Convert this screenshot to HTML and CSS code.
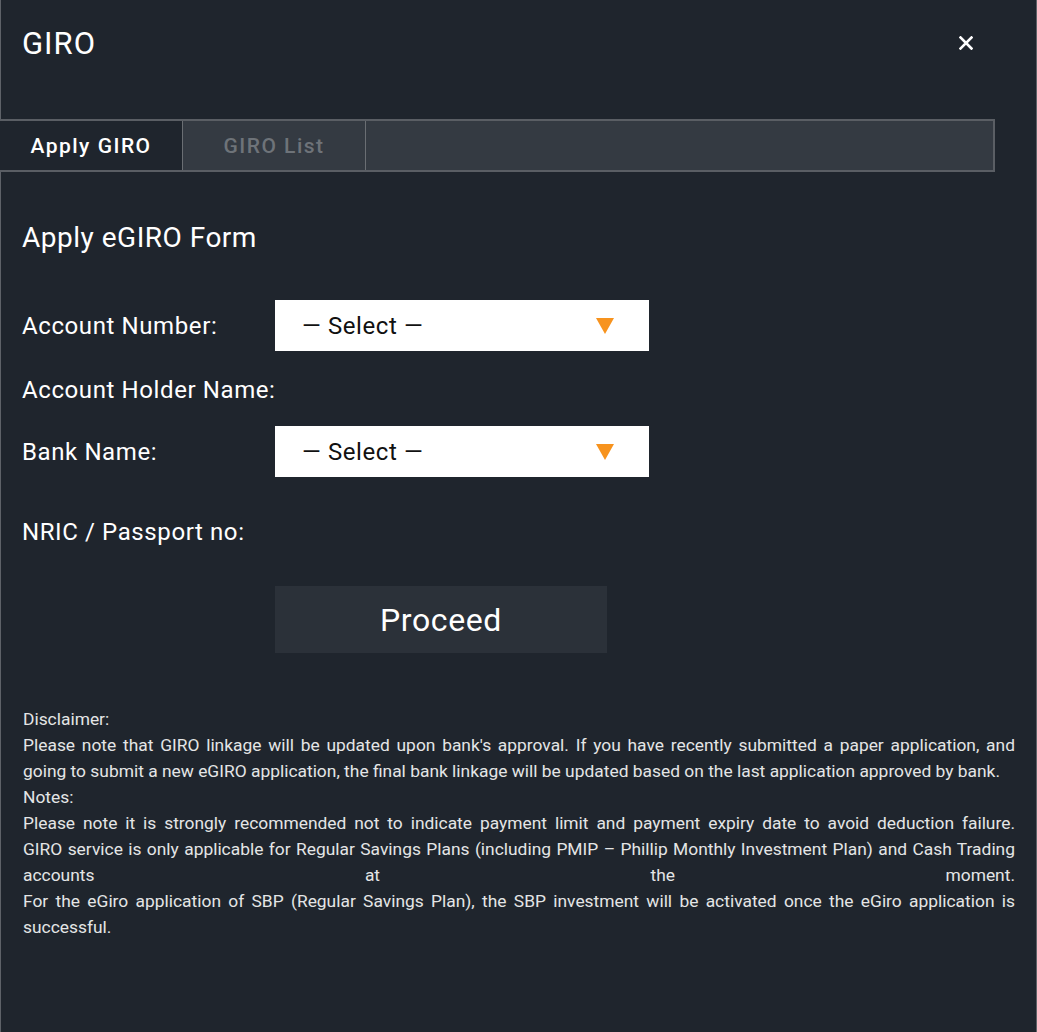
FILE: index.html
```html
<!DOCTYPE html>
<html lang="en">
<head>
<meta charset="utf-8">
<title>GIRO</title>
<link rel="stylesheet" href="styles.css">
</head>
<body>
<div class="dialog">
  <header class="header">
    <h1 class="title">GIRO</h1>
    <button class="close" aria-label="Close">
      <svg width="14" height="14" viewBox="0 0 14 14"><path d="M1.5 1.5 L12.5 12.5 M12.5 1.5 L1.5 12.5" stroke="#fff" stroke-width="2.6" stroke-linecap="square"/></svg>
    </button>
  </header>
  <nav class="tabs">
    <div class="tab active">Apply GIRO</div>
    <div class="tab">GIRO List</div>
    <div class="tab-fill"></div>
  </nav>
  <main class="form">
    <h2 class="form-title">Apply eGIRO Form</h2>
    <div class="row row-select">
      <span class="label">Account Number:</span>
      <div class="select"><span>— Select —</span><span class="caret"></span></div>
    </div>
    <div class="row row-holder">
      <span class="label">Account Holder Name:</span>
    </div>
    <div class="row row-bank">
      <span class="label">Bank Name:</span>
      <div class="select"><span>— Select —</span><span class="caret"></span></div>
    </div>
    <div class="row row-nric">
      <span class="label condensed">NRIC / Passport no:</span>
    </div>
    <button class="proceed">Proceed</button>
    <section class="disclaimer">
      <p>Disclaimer:</p>
      <p class="just">Please note that GIRO linkage will be updated upon bank's approval. If you have recently submitted a paper application, and going to submit a new eGIRO application, the final bank linkage will be updated based on the last application approved by bank.</p>
      <p>Notes:</p>
      <p class="just full">Please note it is strongly recommended not to indicate payment limit and payment expiry date to avoid deduction failure.</p>
      <p class="just full">GIRO service is only applicable for Regular Savings Plans (including PMIP – Phillip Monthly Investment Plan) and Cash Trading accounts at the moment.</p>
      <p class="just">For the eGiro application of SBP (Regular Savings Plan), the SBP investment will be activated once the eGiro application is successful.</p>
    </section>
  </main>
</div>
</body>
</html>
```
FILE: styles.css
```css
html, body {
  margin: 0;
  padding: 0;
  background: #1f252d;
}
body {
  font-family: Roboto, "Noto Sans", Arial, sans-serif;
  color: #fff;
}
.dialog {
  box-sizing: border-box;
  width: 1037px;
  height: 1032px;
  border-left: 1px solid #5e6268;
  border-right: 1px solid #5e6268;
  background: #1f252d;
  display: flex;
  flex-direction: column;
}
.header {
  height: 119px;
  display: flex;
  align-items: flex-start;
  justify-content: space-between;
  padding: 0 63px 0 21px;
}
.title {
  margin: 26px 0 0;
  font-size: 31px;
  font-weight: 400;
  line-height: 36px;
  letter-spacing: 1px;
}
.close {
  margin-top: 36px;
  background: none;
  border: 0;
  padding: 0;
  width: 14px;
  height: 14px;
  display: block;
}
.close svg { display: block; }
.tabs {
  box-sizing: border-box;
  width: 995px;
  height: 53px;
  margin-left: -1px;
  display: flex;
  border-top: 2px solid #5a5e64;
  border-bottom: 2px solid #5a5e64;
  border-right: 2px solid #5a5e64;
  background: #343a42;
}
.tab {
  width: 182px;
  display: flex;
  align-items: center;
  justify-content: center;
  font-size: 21px;
  font-weight: 500;
  letter-spacing: 1.5px;
  color: #6e7379;
  border-right: 1px solid #6a6e73;
}
.tab.active {
  background: #1f252d;
  color: #fff;
}
.tab-fill { flex: 1; }
.form {
  padding: 0 21px 0 21px;
  display: flex;
  flex-direction: column;
}
.form-title {
  margin: 51px 0 0;
  font-size: 28px;
  font-weight: 400;
  line-height: 30px;
  letter-spacing: 0.5px;
}
.row {
  display: flex;
  align-items: center;
}
.label {
  width: 253px;
  flex: none;
  font-size: 24px;
  line-height: 26px;
  letter-spacing: 0.6px;
  white-space: nowrap;
}
.label.condensed { letter-spacing: 0.6px; }
.row-select { margin-top: 47px; }
.row-holder { margin-top: 26px; }
.row-bank { margin-top: 23px; }
.row-nric { margin-top: 42px; }
.select {
  box-sizing: border-box;
  width: 374px;
  height: 51px;
  background: #fff;
  color: #111;
  display: flex;
  align-items: center;
  justify-content: space-between;
  padding: 0 35px 0 27px;
  font-size: 24px;
  letter-spacing: 0.6px;
}
.caret {
  width: 0;
  height: 0;
  border-left: 9px solid transparent;
  border-right: 9px solid transparent;
  border-top: 16px solid #f7931e;
}
.proceed {
  margin: 41px 0 0 253px;
  width: 332px;
  height: 67px;
  border: 0;
  background: #2b3139;
  color: #fff;
  font-family: Roboto, "Noto Sans", Arial, sans-serif;
  font-size: 32px;
  letter-spacing: 0.6px;
}
.disclaimer {
  margin: 53px 0 0 1px;
  font-size: 17.4px;
  line-height: 26px;
  color: #e4e5e6;
}
.disclaimer p { margin: 0; }
.just { text-align: justify; }
.full { text-align-last: justify; }
```
